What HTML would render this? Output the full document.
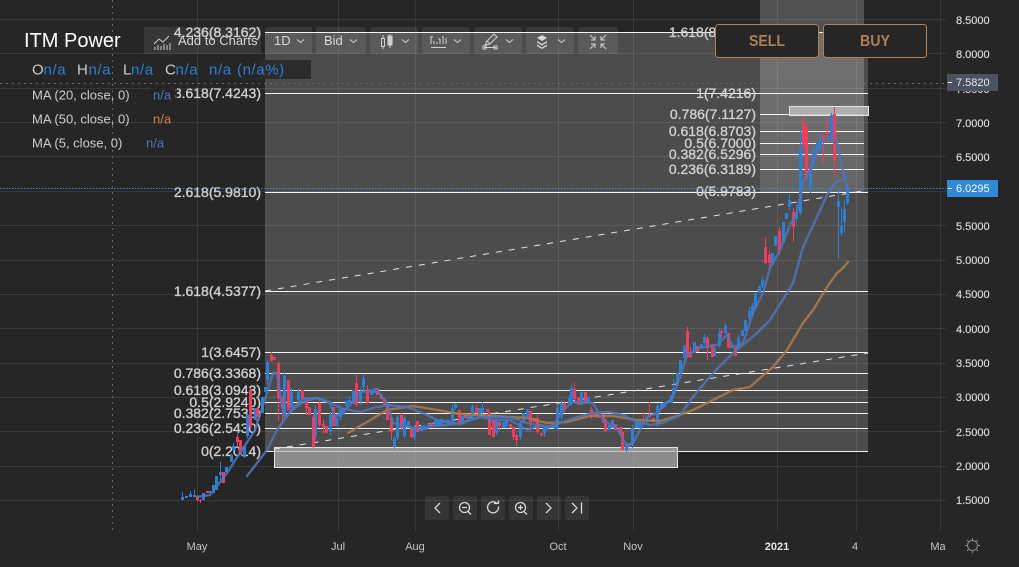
<!DOCTYPE html>
<html><head><meta charset="utf-8"><title>ITM Power</title>
<style>
html,body{margin:0;padding:0;background:#262626;overflow:hidden}
svg{display:block;font-family:"Liberation Sans",sans-serif}
.f{font-size:14px;fill:#cfcfcf;stroke:#cfcfcf;stroke-width:.35px;text-anchor:end}
.p{font-size:11px;fill:#d6d6d6;stroke:#d6d6d6;stroke-width:.2px}
.x{font-size:11px;fill:#c4c4c4;text-anchor:middle}
.m{font-size:13px;fill:#cccccc}
.o{font-size:15px;letter-spacing:.6px}
.i{fill:none;stroke:#d0d0d0;stroke-width:1}
</style></head>
<body>
<svg width="1019" height="567" viewBox="0 0 1019 567" xmlns="http://www.w3.org/2000/svg">
<rect width="1019" height="567" fill="#262626"/>
<!-- shades -->
<rect x="265" y="32" width="603" height="419" fill="#fff" fill-opacity=".175"/>
<defs><linearGradient id="g" x1="0" y1="0" x2="0" y2="1"><stop offset="0" stop-color="#fff" stop-opacity=".2"/><stop offset=".6" stop-color="#fff" stop-opacity=".19"/><stop offset="1" stop-color="#fff" stop-opacity=".13"/></linearGradient></defs>
<rect x="760" y="0" width="104" height="192" fill="url(#g)"/>
<!-- grid -->
<path d="M0 19.5H946M0 53.5H946M0 88.5H946M0 122.5H946M0 156.5H946M0 191.5H946M0 225.5H946M0 260.5H946M0 294.5H946M0 328.5H946M0 363.5H946M0 397.5H946M0 431.5H946M0 466.5H946M0 500.5H946M197.5 0V531M338.5 0V531M415.5 0V531M558.5 0V531M633.5 0V531M777.5 0V531M856.5 0V531M940.5 0V531" stroke="#fff" stroke-opacity=".09" fill="none"/>
<path d="M112.5 0V531M0 83.5H946" stroke="#666" stroke-dasharray="2 4" fill="none"/>
<!-- fib lines -->
<path d="M265 32.5H868M265 93.5H868M265 192.5H868M265 291.5H868M265 352.5H868M265 373.5H868M265 390.5H868M265 402.5H868M265 413.5H868M265 428.5H868M265 451.5H868M760 114.5H864M760 131.5H864M760 143.5H864M760 154.5H864M760 169.5H864" stroke="#f2f2f2" fill="none"/>
<!-- labels -->
<g class="f">
<text x="261" y="37">4.236(8.3162)</text>
<text x="261" y="98">3.618(7.4243)</text>
<text x="261" y="197">2.618(5.9810)</text>
<text x="261" y="296">1.618(4.5377)</text>
<text x="261" y="357">1(3.6457)</text>
<text x="261" y="378">0.786(3.3368)</text>
<text x="261" y="395">0.618(3.0943)</text>
<text x="261" y="407">0.5(2.9240)</text>
<text x="261" y="418">0.382(2.7533)</text>
<text x="261" y="433">0.236(2.5430)</text>
<text x="261" y="456">0(2.2014)</text>
<text x="756" y="37">1.618(8.3136)</text>
<text x="756" y="98">1(7.4216)</text>
<text x="756" y="119">0.786(7.1127)</text>
<text x="756" y="136">0.618(6.8703)</text>
<text x="756" y="148">0.5(6.7000)</text>
<text x="756" y="159">0.382(6.5296)</text>
<text x="756" y="174">0.236(6.3189)</text>
<text x="756" y="196">0(5.9783)</text>
</g>
<!-- rects -->
<rect x="274.5" y="447.5" width="403" height="20" fill="#b4b4b4" fill-opacity=".72" stroke="#e6e6e6"/>
<rect x="789.5" y="106.5" width="79" height="9" fill="#bdbec0" fill-opacity=".8" stroke="#e6e6e6"/>
<!-- trendlines -->
<path d="M265 291L868 190M274 449L868 353" stroke="#e4e4e4" stroke-width="1" stroke-dasharray="6 7" fill="none"/>
<!-- candles -->
<g transform="translate(.5 0)" fill="none">
<path stroke="#2b80d6" stroke-width="1" d="M182 492V500M190 491V497M194 490V497M220 462V482M216 476V490M233 443V452M244 445V458M247 413V438M267 360V385M284 372V418M291 388V412M298 388V402M315 405V440M330 412V435M340 405V420M349 396V405M360 388V405M363 375V392M394 436V449M397 415V440M404 416V438M414 425V440M452 404V424M455 403V410M472 404V420M482 402V415M496 418V435M520 421V440M544 426V437M557 405V430M561 400V420M569 395V405M571 385V405M626 442V452M632 425V448M646 415V424M657 403V427M673 379V397M704 334V345M719 328V348M725 323V334M738 335V350M749 307V320M752 303V316M762 276V288M789 193V210M796 205V225M800 129V215M810 165V193M813 147V167M831 113V142M838 188V259M841 207V236M844 200V232M847 184V205"/>
<path stroke="#ee3d5e" stroke-width="1" d="M197 495V502M200 499V503M237 434V446M250 388V430M271 352V362M278 361V421M282 396V421M306 398V415M313 415V448M319 397V427M323 420V434M356 375V407M367 385V404M391 416V440M401 413V430M411 427V438M476 405V415M499 420V431M513 426V440M516 434V446M530 410V431M537 415V434M564 401V412M574 383V400M591 407V419M649 402V418M643 412V422M687 327V358M690 347V358M707 336V360M721 329V338M765 237V264M769 250V270M779 227V255M793 208V242M803 116V148M806 125V180M823 134V162M827 118V142M834 107V175"/>
<path stroke="#2b80d6" stroke-width="3" d="M182 497V500M186 496V498M190 494V497M194 495V497M203 493V500M209 491V493M213 485V493M216 476V490M220 472V475M226 467V472M231 455V462M233 446V450M244 447V457M247 415V436M255 408V420M262 397V413M265 387V392M267 362V380M284 376V416M291 392V408M298 392V400M315 409V436M330 415V431M336 418V426M340 410V417M343 408V415M346 401V406M349 400V404M353 390V404M360 393V402M363 378V387M371 390V395M374 388V393M394 438V447M397 417V438M404 418V436M408 421V428M414 427V437M421 426V431M424 425V430M428 424V427M435 420V426M438 420V425M441 419V425M445 420V423M448 420V425M452 408V422M455 404V408M462 416V423M468 416V419M472 406V418M479 408V414M482 408V413M496 420V433M503 422V428M506 421V427M520 423V437M523 413V423M527 409V417M544 428V433M547 426V430M552 424V428M555 423V429M557 408V425M561 403V417M569 398V404M571 388V403M581 392V405M588 397V403M609 425V430M612 420V428M626 444V450M629 443V446M632 428V445M636 420V428M639 421V428M646 417V422M657 406V425M661 403V408M664 402V407M668 400V403M671 395V403M673 388V395M677 373V385M680 360V373M684 345V358M694 342V353M701 344V348M704 337V343M714 348V356M719 333V346M725 326V333M731 345V348M738 338V348M742 330V336M745 320V331M749 311V318M752 306V315M755 293V308M759 286V293M762 280V286M772 253V265M775 236V246M783 222V243M786 213V219M789 200V207M796 212V219M800 148V213M810 167V190M813 149V164M817 143V150M820 137V150M831 115V140M838 201V207M841 226V233M844 209V222M847 188V203"/>
<path stroke="#ee3d5e" stroke-width="3" d="M197 496V500M200 500V501M207 491V493M223 472V483M237 437V442M240 440V455M250 390V427M257 408V417M271 355V361M274 357V360M278 363V398M282 398V407M288 380V410M302 390V399M306 400V408M309 407V415M313 417V447M319 403V425M323 424V428M326 426V433M333 407V426M356 383V405M367 389V403M377 388V395M381 395V399M384 399V405M387 404V420M391 418V432M401 415V428M411 428V437M417 421V432M431 423V426M459 410V423M465 415V418M476 408V413M487 409V412M489 412V435M493 420V437M499 422V426M510 424V428M513 427V437M516 435V440M530 411V424M534 418V422M537 418V432M541 433V436M564 403V410M574 389V399M578 397V405M585 392V402M591 409V417M595 412V417M598 412V418M603 414V423M605 419V431M615 424V430M620 427V433M622 432V450M643 420V421M649 414V417M653 418V422M687 331V357M690 352V357M697 346V352M707 338V348M712 344V357M721 331V333M728 333V348M735 347V356M765 247V263M769 255V263M779 231V250M793 212V227M803 122V145M806 127V178M823 136V141M827 132V134M834 114V160"/>
</g>
<!-- MAs -->
<g fill="none" stroke-width="2.4" stroke-linejoin="round" stroke-linecap="round" stroke-opacity=".85">
<path stroke="#b07a48" d="M348 433L367 422L387 410L413 406L437 410L460 414L477 415L510 417L527 418L547 423L567 422L590 416L613 416L637 420L660 421L677 416L693 410L717 398L733 390L750 387L760 378L772 368L787 350L803 323L813 310L827 287L837 273L842 269L848 262"/>
<path stroke="#4f74ba" d="M247 476L267 450L277 430L290 412L303 402L317 398L330 402L340 408L360 412L373 408L387 405L407 407L427 415L437 420L460 424L480 417L493 417L510 417L527 423L547 427L560 423L577 417L593 413L610 412L623 415L637 422L650 425L663 423L680 415L693 397L713 373L733 353L743 345L757 333L770 320L787 293L793 283L803 247L817 217L827 195L835 183L848 176"/>
<path stroke="#4f74ba" d="M197 497L210 495L218 485L227 473L240 453L255 430L267 393L273 373L277 373L282 407L285 418L293 408L303 399L317 398L330 403L335 417L342 412L350 405L360 392L377 390L387 403L393 423L410 427L420 430L433 426L447 425L460 423L480 417L493 420L510 420L527 430L540 425L553 427L563 410L573 402L593 403L603 420L617 428L627 447L633 443L647 417L657 413L673 397L680 377L687 355L700 348L717 345L727 335L733 347L743 343L753 313L763 293L770 268L780 250L790 225L797 212L803 183L810 170L820 143L830 137L837 143L842 167L847 187"/>
</g>
<!-- toolbar -->
<g fill="#fff" fill-opacity=".08">
<rect x="144" y="27" width="117" height="27" rx="2"/><rect x="265" y="27" width="47" height="27" rx="2"/><rect x="316" y="27" width="50" height="27" rx="2"/><rect x="370" y="27" width="48" height="27" rx="2"/><rect x="422" y="27" width="48" height="27" rx="2"/><rect x="474" y="27" width="48" height="27" rx="2"/><rect x="526" y="27" width="48" height="27" rx="2"/><rect x="578" y="27" width="40" height="27" rx="2"/>
</g>
<text x="178" y="45" font-size="13" fill="#d8d8d8">Add to Charts</text>
<text x="274" y="45" font-size="13" fill="#d8d8d8">1D</text>
<text x="324" y="45" font-size="13" fill="#d8d8d8">Bid</text>
<path class="i" stroke-width="1.4" d="M297 39.5l3.5 3 3.5-3M350 39.5l3.5 3 3.5-3M402 39.5l3.5 3 3.5-3M454 39.5l3.5 3 3.5-3M506 39.5l3.5 3 3.5-3M558 39.5l3.5 3 3.5-3"/>
<!-- icons -->
<path class="i" d="M154 44l5-5 4 3 6-6M155 50v-3M158 50v-5M161 50v-4M164 50v-6M167 50v-5M170 50v-7"/>
<g class="i"><rect x="381.5" y="38.5" width="3" height="8"/><rect x="388" y="36" width="4" height="9" fill="#d0d0d0"/><path d="M383 35v3M383 47v2M390 34v2M390 45v3"/></g>
<g class="i"><path d="M431 47.5H446M431 36v8M434 41v3M437 42v2M440 39v5M443 36v8M446 38v6"/><path stroke-dasharray="2 1" d="M431 37h2M438 39h3"/></g>
<g class="i"><path d="M485 45l2-4 7-7 3 3-7 7zM487 41l3 3M484 47.5h12"/><rect x="483" y="46" width="3" height="3"/><rect x="494" y="46" width="3" height="3"/></g>
<g fill="#d8d8d8"><path d="M542 35l5 3-5 3-5-3zM537 41l5 3 5-3v1.500l-5 3-5-3zM537 44.500l5 3 5-3v1.500l-5 3-5-3z"/></g>
<path class="i" stroke-width="1.300" d="M590 35l5 5M595 36v4h-4M606 35l-5 5M601 36v4h4M590 49l5-5M595 48v-4h-4M606 49l-5-5M601 48v-4h4"/>
<!-- legend -->
<text x="24" y="47" font-size="20" fill="#ffffff">ITM Power</text>
<rect x="260" y="60" width="51" height="19" fill="#2c2c2c"/>
<g class="o" fill="#cccccc"><text x="32" y="74.500">O</text><text x="77" y="74.500">H</text><text x="123" y="74.500">L</text><text x="165" y="74.500">C</text></g>
<g class="o" fill="#2a7fd4"><text x="43.500" y="74.500">n/a</text><text x="88.500" y="74.500">n/a</text><text x="131" y="74.500">n/a</text><text x="175.500" y="74.500">n/a</text><text x="209" y="74.500">n/a</text><text x="237" y="74.500">(n/a%)</text></g>
<rect x="150" y="86" width="27" height="17" fill="#262626" fill-opacity=".75"/>
<text class="m" x="32" y="99.500">MA (20, close, 0)</text>
<text class="m" x="32" y="123.500">MA (50, close, 0)</text>
<text class="m" x="32" y="147.500">MA (5, close, 0)</text>
<text x="153" y="99.500" font-size="13" fill="#4f74ba">n/a</text>
<text x="153" y="123.500" font-size="13" fill="#c8843c">n/a</text>
<text x="146" y="147.500" font-size="13" fill="#4f74ba">n/a</text>
<!-- blue price line -->
<path d="M0 188.500H946" stroke="#2b8ce6" stroke-dasharray="1.500 1.500" fill="none"/>
<!-- buttons -->
<rect x="715.500" y="24.500" width="103" height="33" rx="3" fill="#262626" stroke="#b08258"/>
<rect x="823.500" y="24.500" width="103" height="33" rx="3" fill="#262626" stroke="#b08258"/>
<text x="749" y="46" font-size="16" font-weight="bold" fill="#ad7f55" textLength="36" lengthAdjust="spacingAndGlyphs">SELL</text>
<text x="860" y="46" font-size="16" font-weight="bold" fill="#ad7f55" textLength="30" lengthAdjust="spacingAndGlyphs">BUY</text>
<!-- price axis -->
<g class="p">
<text x="956" y="24">8.5000</text><text x="956" y="58">8.0000</text><text x="956" y="93">7.5000</text><text x="956" y="127">7.0000</text><text x="956" y="161">6.5000</text><text x="956" y="230">5.5000</text><text x="956" y="264">5.0000</text><text x="956" y="298">4.5000</text><text x="956" y="333">4.0000</text><text x="956" y="367">3.5000</text><text x="956" y="401">3.0000</text><text x="956" y="436">2.5000</text><text x="956" y="470">2.0000</text><text x="956" y="504">1.5000</text>
</g>
<rect x="947" y="74" width="51" height="17" fill="#4d5261"/>
<rect x="947" y="180" width="51" height="17" fill="#2f88d8"/>
<path d="M948 82.500h4M948 188.500h4" stroke="#fff" fill="none"/>
<text x="956" y="86" font-size="11" fill="#e8e8e8">7.5820</text>
<text x="956" y="192" font-size="11" fill="#ffffff">6.0295</text>
<!-- nav -->
<g fill="#fff" fill-opacity=".07">
<rect x="425" y="496" width="24" height="24" rx="2"/><rect x="453" y="496" width="24" height="24" rx="2"/><rect x="481" y="496" width="24" height="24" rx="2"/><rect x="509" y="496" width="24" height="24" rx="2"/><rect x="537" y="496" width="24" height="24" rx="2"/><rect x="565" y="496" width="24" height="24" rx="2"/>
</g>
<g fill="none" stroke="#d8d8d8" stroke-width="1.300">
<path d="M440 503l-5 5 5 5"/>
<circle cx="464.500" cy="507.500" r="5"/><path d="M462 507.500h5M468 511.500l3 3"/>
<path d="M497 503.500a5.500 5.500 0 1 0 1.500 3"/><path d="M494 503.500h4.500v-3" fill="none"/>
<circle cx="520.500" cy="507.500" r="5"/><path d="M518 507.500h5M520.500 505v5M524 511.500l3 3"/>
<path d="M546 503l5 5-5 5"/>
<path d="M572 503l5 5-5 5M581.500 502.500v11"/>
</g>
<!-- x axis -->
<g class="x">
<text x="197" y="550">May</text><text x="338" y="550">Jul</text><text x="415" y="550">Aug</text><text x="558" y="550">Oct</text><text x="633" y="550">Nov</text><text x="777" y="550" font-weight="bold" fill="#e6e6e6">2021</text><text x="855" y="550">4</text><text x="938" y="550">Ma</text>
</g>
<g fill="none" stroke="#8a8a8a"><circle cx="972.500" cy="545.500" r="5"/><path d="M972.500 538v2M972.500 551v2M965 545.500h2M978 545.500h2M967 540l1.500 1.500M976.500 549.500l1.500 1.500M967 551l1.500-1.500M976.500 541.500l1.500-1.500"/></g>
</svg>
</body></html>
